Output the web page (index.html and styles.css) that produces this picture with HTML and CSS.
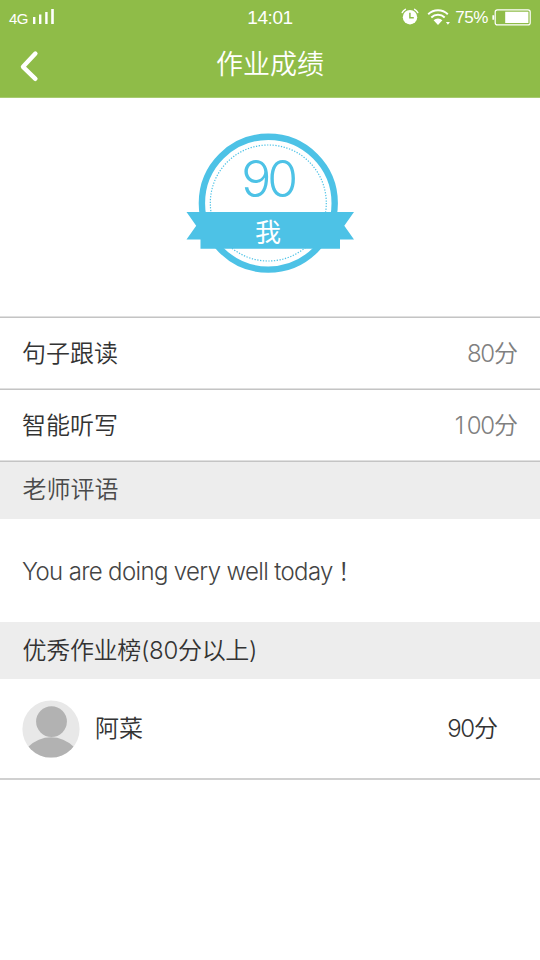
FILE: index.html
```html
<!DOCTYPE html>
<html lang="zh-CN">
<head>
<meta charset="utf-8">
<title>作业成绩</title>
<link rel="stylesheet" href="styles.css">
</head>
<body>
<header class="header">
  <div class="status">
    <div class="status-left">
      <span class="network">4G</span>
      <svg class="signal" width="22" height="16" viewBox="0 0 22 16" fill="currentColor"><path d="M0 8h2.4v7H0zM6 5.5h2.4V15H6zM12.2 3h2.4v12h-2.4zM18.2 0h2.6v15h-2.6z"/></svg>
    </div>
    <time class="clock">14:01</time>
    <div class="status-right">
      <svg width="18" height="18" viewBox="0 0 18 18"><circle cx="9" cy="9.2" r="7.2" fill="#fff"/><path d="M1.2 4.6A7 7 0 0 1 4.4 1.3M13.6 1.3a7 7 0 0 1 3.2 3.3" fill="none" stroke="#fff" stroke-width="1.4" stroke-linecap="round"/><path d="M8.9 4.8v5h3.9" fill="none" stroke="#8fbc48" stroke-width="1.5"/></svg>
      <svg class="wifi" width="24" height="18" viewBox="0 0 24 18" fill="none" stroke="#fff" stroke-width="1.9"><path d="M1.2 6.2a14 14 0 0 1 19.6 0M4.3 9.5a9.5 9.5 0 0 1 13.4 0"/><path d="M6.6 12.2a6.3 6.3 0 0 1 8.8 0L11 17zM18.9 14h4l-2 2.7z" fill="#fff" stroke="none"/></svg>
      <span class="percent">75%</span>
      <svg width="39" height="17" viewBox="0 0 39 17"><rect x="3.2" y=".9" width="35" height="15" rx="2.2" fill="none" stroke="#fff" stroke-width="1.2"/><path d="M.4 6.2h1.8v4.6H.4zM13.2 2.8h23.2v11.3H13.2z" fill="#fff"/></svg>
    </div>
  </div>
  <div class="titlebar">
    <svg class="back" width="20" height="32" viewBox="0 0 20 32"><path d="M16.4 3.6L4 16.8l12.4 12" fill="none" stroke="#fff" stroke-width="4.4" stroke-linecap="round" stroke-linejoin="round"/></svg>
    <h1 class="title">作业成绩</h1>
  </div>
</header>
<main>
  <section class="hero">
    <svg class="badge" width="190" height="165" viewBox="0 0 190 165">
      <circle cx="93.3" cy="83.2" r="66.4" fill="none" stroke="#4dc2e6" stroke-width="6.4"/>
      <circle cx="93.3" cy="83" r="58" fill="none" stroke="#4dc2e6" stroke-width="1.2" stroke-dasharray="1.3 1.5"/>
      <path d="M11.5 92h167.5l-9.7 13.7 9.7 13.8h-14v9.3H25.5v-9.3h-14l9.7-13.8z" fill="#4dc2e6"/>
      <text class="badge-score" x="94.7" y="76.8" text-anchor="middle" textLength="57" lengthAdjust="spacing">90</text>
      <text class="badge-name" x="93" y="121.5" text-anchor="middle">我</text>
    </svg>
  </section>
  <ul class="scores">
    <li class="row"><span>句子跟读</span><span class="value">80<b>分</b></span></li>
    <li class="row"><span>智能听写</span><span class="value"><i class="one">1</i>00<b>分</b></span></li>
  </ul>
  <h2 class="section muted">老师评语</h2>
  <p class="comment">You are doing very well today<b class="mark">！</b></p>
  <h2 class="section rank">优秀作业榜(80分以上)</h2>
  <div class="student">
    <svg class="avatar" width="58" height="58" viewBox="0 0 58 58"><clipPath id="face"><circle cx="29" cy="29" r="28.6"/></clipPath><g clip-path="url(#face)"><path d="M0 0h58v58H0z" fill="#e8e8e8"/><circle cx="29.5" cy="21.6" r="15.4" fill="#b2b2b2"/><circle cx="29" cy="69" r="31.7" fill="#b2b2b2"/></g></svg>
    <span class="student-name">阿菜</span>
    <span class="student-score">90<b>分</b></span>
  </div>
</main>
</body>
</html>
```
FILE: styles.css
```css
* { box-sizing: border-box; }
body {
  margin: 0;
  background: #fff;
  color: #333;
  font: 300 24px/36px Inter, "Noto Sans CJK SC", sans-serif;
}
b { font-weight: 350; letter-spacing: 0; }
svg { display: block; flex: none; }
h1, h2, p, ul { margin: 0; padding: 0; font-weight: 350; font-size: 24px; }
.header { height: 98px; background: #8fbc48; color: #fff; border-bottom: 1px solid #a7cb70; }
.status {
  display: grid;
  grid-template-columns: 1fr auto 1fr;
  align-items: center;
  height: 34px;
  padding: 0 9px 0 9px;
}
.status-left { display: flex; align-items: center; gap: 5px; }
.network { font: 15px/20px "Liberation Sans", sans-serif; letter-spacing: -.6px; padding-top: 4px; }
.clock { font: 19px/20px "Liberation Sans", sans-serif; letter-spacing: -.4px; padding-top: 2px; }
.status-right { display: flex; align-items: center; justify-content: flex-end; }
.wifi { margin-left: 8px; }
.percent { font: 17px/20px "Liberation Sans", sans-serif; letter-spacing: -.4px; margin: 2px 4px 0 4px; }
.titlebar { display: grid; grid-template-columns: 1fr auto 1fr; height: 63px; }
.back { margin: 16px 0 0 19px; }
.title { font-size: 27px; line-height: 61px; }
.hero { height: 218px; display: flex; justify-content: center; padding-top: 22px; }
.badge-score { font-size: 50px; font-weight: 300; fill: #4dc2e6; }
.badge-name { font-size: 26px; font-weight: 400; fill: #fff; }
.scores { list-style: none; }
.row {
  display: flex;
  justify-content: space-between;
  height: 72px;
  padding: 19px 22px 0 22px;
  border-top: 1px solid #e0e0e0;
  box-shadow: inset 0 1px #c4c4c4;
}
.value { color: #808080; letter-spacing: -1.2px; }
.one { font-style: normal; letter-spacing: 2.6px; }
.section { height: 57px; padding: 11px 22.5px 0; background: #ededed; }
.muted {
  height: 59px;
  border-top: 1px solid #e0e0e0;
  box-shadow: inset 0 1px #c4c4c4;
  color: #4a4a4a;
}
.comment { height: 103px; padding: 33px 22px; font-weight: 300; letter-spacing: -.65px; color: #444; }
.mark { font-family: "Noto Sans CJK SC", sans-serif; margin-left: 5px; }
.rank { letter-spacing: -.3px; }
.student {
  display: flex;
  height: 101px;
  padding: 21px 42px 0 22px;
  border-bottom: 2px solid #d0d0d0;
  font-weight: 350;
}
.student-name { margin: 11px 0 0 15px; }
.student-score { margin: 11px 0 0 auto; font-weight: 300; letter-spacing: -1.2px; }
```
